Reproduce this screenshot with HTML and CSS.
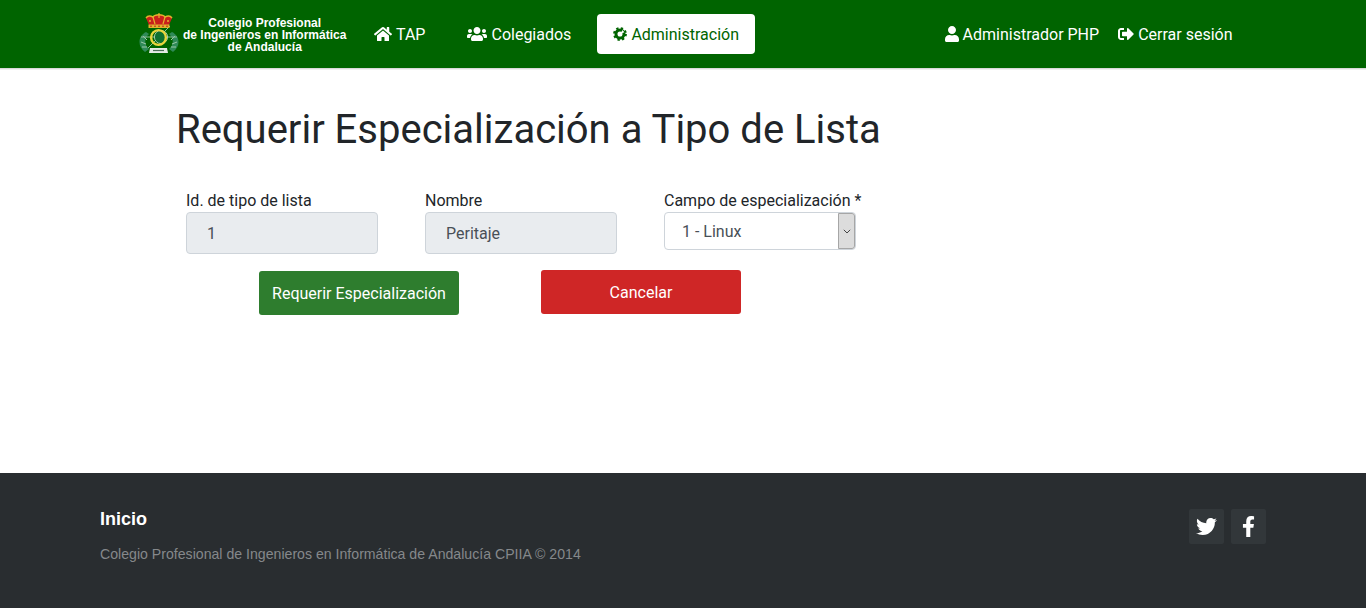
FILE: index.html
```html
<!DOCTYPE html>
<html lang="es">
<head>
<meta charset="utf-8">
<title>Requerir Especialización a Tipo de Lista</title>
<link rel="stylesheet" href="styles.css">
</head>
<body>
<header class="navbar">
  <a class="brand" href="#">
    <svg class="crest" viewBox="0 0 42 42" width="42" height="42" aria-hidden="true">
      <path d="M8 19 C0 23 -1 33 7 39 L11 36 C6 32 6 25 11 21Z" fill="#2f8a57"/>
      <path d="M34 19 C42 23 43 33 35 39 L31 36 C36 32 36 25 31 21Z" fill="#2f8a57"/>
      <path d="M5 23 L9 27 M3 29 L8 31 M4 34 L9 34 M37 23 L33 27 M39 29 L34 31 M38 34 L33 34" stroke="#9cc9a8" stroke-width="1" fill="none"/>
      <path d="M3 24 H39 M10 35 L32 13" stroke="#8dbb9b" stroke-width="1" fill="none"/>
      <circle cx="23" cy="24" r="6.6" fill="#0f7030" stroke="#a5c9ac" stroke-width="1"/>
      <circle cx="20.5" cy="24.5" r="7.4" fill="none" stroke="#e9d53c" stroke-width="2.4"/>
      <path d="M8 5 C10 2 13 3 15 4 C17 1 25 1 27 4 C29 3 32 2 34 5 L31 12 H11Z" fill="#c9201c"/>
      <path d="M8 5 C10 2 13 3 15 4 C17 1 25 1 27 4 C29 3 32 2 34 5" fill="none" stroke="#e3b12c" stroke-width="1.4"/>
      <path d="M21 0 V5 M15 4 L17 11 M27 4 L25 11" stroke="#e3b12c" stroke-width="1.2" fill="none"/>
      <circle cx="12" cy="8" r="1" fill="#e3b12c"/><circle cx="30" cy="8" r="1" fill="#e3b12c"/>
      <path d="M10.5 11.5 H31.5 V15 H10.5Z" fill="#e3b12c"/>
      <path d="M12 13.2 H30" stroke="#b03020" stroke-width="1" stroke-dasharray="2 2"/>
      <path d="M12 35 H29 L30 40 H11Z" fill="#e6ebe6"/>
      <path d="M15 37.5 H26" stroke="#4d6f58" stroke-width="1.2"/>
    </svg>
    <span class="brand-text">Colegio Profesional<br>de Ingenieros en Informática<br>de Andalucía</span>
  </a>
  <nav class="nav-main">
    <a class="nav-link" href="#"><svg class="ico ico-home" viewBox="0 0 576 512"><path d="M280.37 148.26L96 300.11V464a16 16 0 0 0 16 16l112.06-.29a16 16 0 0 0 15.92-16V368a16 16 0 0 1 16-16h64a16 16 0 0 1 16 16v95.64a16 16 0 0 0 16 16.05L464 480a16 16 0 0 0 16-16V300L295.67 148.26a12.19 12.19 0 0 0-15.3 0zM571.6 251.47L488 182.56V44.05a12 12 0 0 0-12-12h-56a12 12 0 0 0-12 12v72.61L318.47 43a48 48 0 0 0-61 0L4.34 251.47a12 12 0 0 0-1.6 16.9l25.5 31A12 12 0 0 0 45.15 301l235.22-193.74a12.19 12.19 0 0 1 15.3 0L530.9 301a12 12 0 0 0 16.9-1.6l25.5-31a12 12 0 0 0-1.7-16.93z"/></svg><span class="nav-text">TAP</span></a>
    <a class="nav-link" href="#"><svg class="ico ico-users" viewBox="0 0 640 512"><path d="M96 224c35.3 0 64-28.7 64-64s-28.7-64-64-64-64 28.7-64 64 28.7 64 64 64zm448 0c35.3 0 64-28.7 64-64s-28.7-64-64-64-64 28.7-64 64 28.7 64 64 64zm32 32h-64c-17.6 0-33.5 7.1-45.1 18.6 40.3 22.1 68.9 62 75.1 109.4h66c17.7 0 32-14.3 32-32v-32c0-35.3-28.7-64-64-64zm-256 0c61.9 0 112-50.1 112-112S381.9 32 320 32 208 82.1 208 144s50.1 112 112 112zm76.8 32h-8.3c-20.8 10-43.9 16-68.5 16s-47.6-6-68.5-16h-8.3C179.6 288 128 339.6 128 403.2V432c0 26.5 21.5 48 48 48h288c26.5 0 48-21.5 48-48v-28.8c0-63.6-51.6-115.2-115.2-115.2zm-223.7-13.4C161.5 263.1 145.6 256 128 256H64c-35.3 0-64 28.7-64 64v32c0 17.7 14.3 32 32 32h65.9c6.3-47.4 34.9-87.3 75.2-109.4z"/></svg><span class="nav-text">Colegiados</span></a>
    <a class="nav-link active" href="#"><svg class="ico ico-cog" viewBox="0 0 16 16"><circle class="cog-teeth" cx="8" cy="8" r="6.6"/><circle class="cog-ring" cx="8" cy="8" r="4.6"/><path class="cog-notch" d="M8 8 L11 3.5 L13 6Z"/></svg><span class="nav-text">Administración</span></a>
  </nav>
  <nav class="nav-user">
    <a class="nav-link tight" href="#"><svg class="ico ico-user" viewBox="0 0 448 512"><path d="M224 256c70.7 0 128-57.3 128-128S294.7 0 224 0 96 57.3 96 128s57.3 128 128 128zm89.6 32h-16.7c-22.2 10.2-46.9 16-72.9 16s-50.6-5.8-72.9-16h-16.7C60.2 288 0 348.2 0 422.4V464c0 26.5 21.5 48 48 48h352c26.5 0 48-21.5 48-48v-41.6c0-74.2-60.2-134.4-134.4-134.4z"/></svg><span class="nav-text">Administrador PHP</span></a>
    <a class="nav-link tight" href="#"><svg class="ico ico-out" viewBox="0 0 512 512"><path d="M497 273L329 441c-15 15-41 4.5-41-17v-96H152c-13.3 0-24-10.7-24-24v-96c0-13.3 10.7-24 24-24h136V88c0-21.4 25.9-32 41-17l168 168c9.3 9.4 9.3 24.6 0 34zM192 436v-40c0-6.6-5.4-12-12-12H96c-17.7 0-32-14.3-32-32V160c0-17.7 14.3-32 32-32h84c6.6 0 12-5.4 12-12V76c0-6.6-5.4-12-12-12H96c-53 0-96 43-96 96v192c0 53 43 96 96 96h84c6.6 0 12-5.4 12-12z"/></svg><span class="nav-text">Cerrar sesión</span></a>
  </nav>
</header>

<main class="content">
  <h1 class="title">Requerir Especialización a Tipo de Lista</h1>
  <form class="form">
    <div class="fields">
      <div class="field">
        <label class="label" for="f-id">Id. de tipo de lista</label>
        <input class="input" id="f-id" value="1" readonly>
      </div>
      <div class="field">
        <label class="label" for="f-nombre">Nombre</label>
        <input class="input" id="f-nombre" value="Peritaje" readonly>
      </div>
      <div class="field">
        <label class="label" for="f-campo">Campo de especialización *</label>
        <div class="select-wrap">
          <select class="select" id="f-campo"><option>1 - Linux</option></select>
          <span class="select-arrow"><svg viewBox="0 0 8 5" width="8" height="5"><path d="M.8.8 4 4 7.2.8" fill="none" stroke="#444" stroke-width="1"/></svg></span>
        </div>
      </div>
    </div>
    <div class="actions">
      <button class="btn btn-green" type="button">Requerir Especialización</button>
      <button class="btn btn-red" type="button">Cancelar</button>
    </div>
  </form>
</main>

<footer class="footer">
  <div class="footer-text">
    <h2 class="footer-title">Inicio</h2>
    <p class="footer-copy">Colegio Profesional de Ingenieros en Informática de Andalucía CPIIA © 2014</p>
  </div>
  <div class="social">
    <a class="social-btn" href="#"><svg class="ico-tw" viewBox="0 0 512 512"><path d="M459.37 151.716c.325 4.548.325 9.097.325 13.645 0 138.72-105.583 298.558-298.558 298.558-59.452 0-114.68-17.219-161.137-47.106 8.447.974 16.568 1.299 25.34 1.299 49.055 0 94.213-16.568 130.274-44.832-46.132-.975-84.792-31.188-98.112-72.772 6.498.974 12.995 1.624 19.818 1.624 9.421 0 18.843-1.3 27.614-3.573-48.081-9.747-84.143-51.98-84.143-102.985v-1.299c13.969 7.797 30.214 12.67 47.431 13.319-28.264-18.843-46.781-51.005-46.781-87.391 0-19.492 5.197-37.36 14.294-52.954 51.655 63.675 129.3 105.258 216.365 109.807-1.624-7.797-2.599-15.918-2.599-24.04 0-57.828 46.782-104.934 104.934-104.934 30.213 0 57.502 12.67 76.67 33.137 23.715-4.548 46.456-13.32 66.599-25.34-7.798 24.366-24.366 44.833-46.132 57.827 21.117-2.273 41.584-8.122 60.426-16.243-14.292 20.791-32.161 39.308-52.628 54.253z"/></svg></a>
    <a class="social-btn" href="#"><svg class="ico-fb" viewBox="0 0 320 512"><path d="M279.14 288l14.22-92.66h-88.91v-60.13c0-25.35 12.42-50.06 52.24-50.06h40.42V6.26S260.43 0 225.36 0c-73.22 0-121.08 44.38-121.08 124.72v70.62H22.89V288h81.39v224h100.17V288z"/></svg></a>
  </div>
</footer>
</body>
</html>
```

FILE: styles.css
```css
* { box-sizing: border-box; }
html, body { margin: 0; padding: 0; }
body {
  font-family: Roboto, "Liberation Sans", sans-serif;
  font-size: 16px;
  line-height: 1.5;
  color: #212529;
  background: #fff;
  height: 608px;
  display: flex;
  flex-direction: column;
  overflow: hidden;
}
a { text-decoration: none; color: inherit; }

.navbar {
  height: 68px;
  flex: none;
  background: #006400;
  display: flex;
  align-items: center;
  padding: 0 124px 0 138px;
  color: #fff;
  box-shadow: 0 1px 0 #d9d9d9, 0 2px 0 #f0f0f0;
}
.brand { display: flex; align-items: center; width: 220px; flex: none; }
.crest { flex: none; }
.brand-text {
  font-family: "Liberation Sans", Arial, sans-serif;
  font-weight: 700;
  font-size: 12px;
  line-height: 12px;
  text-align: center;
  margin-left: 3px;
  padding-top: 2px;
  white-space: nowrap;
  color: #fff;
}
.nav-main { display: flex; gap: 10px; }
.nav-user { display: flex; margin-left: auto; }
.nav-link {
  display: flex;
  align-items: center;
  height: 40px;
  padding: 0 16px;
  border-radius: 4px;
  color: #fff;
  white-space: nowrap;
}
.nav-text { position: relative; top: 1px; }
.nav-link.tight { padding: 0 9.5px; }
.nav-link.active { background: #fff; color: #006400; }
.ico { fill: currentColor; height: 16px; flex: none; margin-right: 4px; }
.ico-home { width: 18px; }
.ico-users { width: 20px; }
.ico-cog { width: 14px; height: 14px; margin-right: 4px; }
.ico-user { width: 14px; }
.ico-out { width: 16px; }
.cog-ring { fill: none; stroke: currentColor; stroke-width: 3.4; }
.cog-teeth { fill: none; stroke: currentColor; stroke-width: 2.6; stroke-dasharray: 2.6 2.6; }
.cog-notch { fill: #fff; }

.content { flex: 1; padding: 0 0 0 176px; }
.title {
  margin: 34px 0 0;
  font-size: 40px;
  font-weight: 400;
  line-height: 56px;
}
.form { margin-top: 30px; }
.fields { display: flex; align-items: flex-start; padding-left: 10px; gap: 47px; }
.field { width: 192px; flex: none; }
.label { display: block; height: 24px; line-height: 26px; white-space: nowrap; }
.input {
  display: block;
  width: 100%;
  height: 42px;
  padding: 0 20px;
  border: 1px solid #ced4da;
  border-radius: 4px;
  background: #e9ecef;
  color: #495057;
  font: inherit;
  outline: none;
}
.select-wrap { position: relative; height: 38px; }
.select {
  display: block;
  width: 100%;
  height: 38px;
  padding: 2px 16px 0 17px;
  border: 1px solid #ced4da;
  border-radius: 4px;
  background: #fff;
  color: #495057;
  font: inherit;
  appearance: none;
  -webkit-appearance: none;
}
.select-arrow {
  position: absolute;
  top: 1px;
  right: 1px;
  width: 17px;
  height: 36px;
  display: flex;
  align-items: center;
  justify-content: center;
  background: #dcdcdc;
  border: 1px solid #a6a6a6;
  border-radius: 0 3px 3px 0;
}
.actions { display: flex; align-items: flex-start; padding-left: 83px; margin-top: 16px; gap: 82px; }
.btn {
  width: 200px;
  height: 44px;
  padding: 2px 0 0;
  border: 0;
  border-radius: 3px;
  color: #fff;
  font: inherit;
}
.btn-green { background: #2e7d2e; margin-top: 1px; }
.btn-red { background: #cf2626; }

.footer {
  height: 135px;
  flex: none;
  background: #292d30;
  display: flex;
  justify-content: space-between;
  padding: 36px 100px 0;
  font-family: "Liberation Sans", Arial, sans-serif;
}
.footer-title {
  margin: 0;
  font-size: 18px;
  font-weight: 700;
  line-height: 20px;
  color: #fff;
}
.footer-copy {
  margin: 15px 0 0;
  font-size: 14.14px;
  line-height: 20px;
  color: #85888b;
}
.social { display: flex; gap: 7px; }
.social-btn {
  width: 35px;
  height: 35px;
  background: #32373a;
  border-radius: 2px;
  display: flex;
  align-items: center;
  justify-content: center;
  fill: #fff;
}
.ico-tw { width: 21px; height: 21px; }
.ico-fb { width: 13px; height: 21px; }
```
